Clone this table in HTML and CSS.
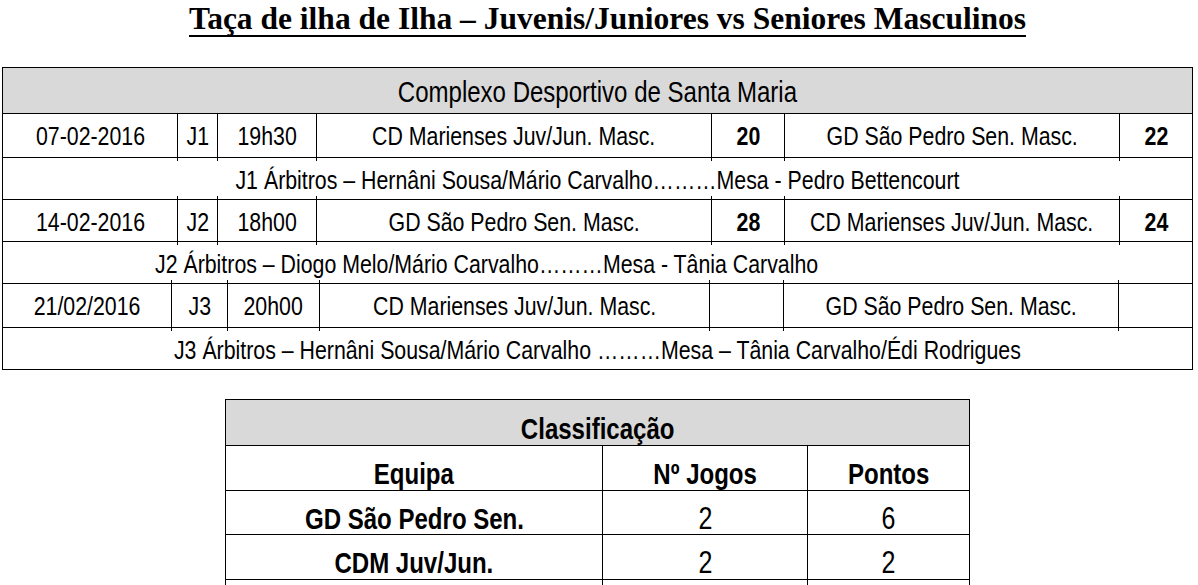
FILE: index.html
```html
<!DOCTYPE html>
<html lang="pt">
<head>
<meta charset="utf-8">
<title>Taça de ilha de Ilha</title>
<link rel="stylesheet" href="styles.css">
</head>
<body>
<h1 class="title"><span class="title-text">Taça de ilha de Ilha – Juvenis/Juniores vs Seniores Masculinos</span></h1>

<div class="schedule">
  <div class="venue"><span class="t">Complexo Desportivo de Santa Maria</span></div>

  <div class="game tall first">
    <div class="cell"><span class="t">07-02-2016</span></div>
    <div class="cell"><span class="t">J1</span></div>
    <div class="cell"><span class="t">19h30</span></div>
    <div class="cell"><span class="t">CD Marienses Juv/Jun. Masc.</span></div>
    <div class="cell score"><span class="t">20</span></div>
    <div class="cell"><span class="t">GD São Pedro Sen. Masc.</span></div>
    <div class="cell score"><span class="t">22</span></div>
  </div>
  <div class="refs"><span class="t">J1 Árbitros – Hernâni Sousa/Mário Carvalho………Mesa - Pedro Bettencourt</span></div>

  <div class="game">
    <div class="cell"><span class="t">14-02-2016</span></div>
    <div class="cell"><span class="t">J2</span></div>
    <div class="cell"><span class="t">18h00</span></div>
    <div class="cell"><span class="t">GD São Pedro Sen. Masc.</span></div>
    <div class="cell score"><span class="t">28</span></div>
    <div class="cell"><span class="t">CD Marienses Juv/Jun. Masc.</span></div>
    <div class="cell score"><span class="t">24</span></div>
  </div>
  <div class="refs left"><span class="t">J2 Árbitros – Diogo Melo/Mário Carvalho………Mesa - Tânia Carvalho</span></div>

  <div class="game tall alt">
    <div class="cell"><span class="t">21/02/2016</span></div>
    <div class="cell"><span class="t">J3</span></div>
    <div class="cell"><span class="t">20h00</span></div>
    <div class="cell"><span class="t">CD Marienses Juv/Jun. Masc.</span></div>
    <div class="cell score"></div>
    <div class="cell"><span class="t">GD São Pedro Sen. Masc.</span></div>
    <div class="cell score"></div>
  </div>
  <div class="refs"><span class="t">J3 Árbitros – Hernâni Sousa/Mário Carvalho ………Mesa – Tânia Carvalho/Édi Rodrigues</span></div>
</div>

<div class="standings">
  <div class="standings-head"><span class="t">Classificação</span></div>
  <div class="standings-row labels">
    <div class="scell"><span class="t">Equipa</span></div>
    <div class="scell"><span class="t">Nº Jogos</span></div>
    <div class="scell"><span class="t">Pontos</span></div>
  </div>
  <div class="standings-row">
    <div class="scell team"><span class="t">GD São Pedro Sen.</span></div>
    <div class="scell num"><span class="t">2</span></div>
    <div class="scell num"><span class="t">6</span></div>
  </div>
  <div class="standings-row tall">
    <div class="scell team"><span class="t">CDM Juv/Jun.</span></div>
    <div class="scell num"><span class="t">2</span></div>
    <div class="scell num"><span class="t">2</span></div>
  </div>
  <div class="standings-row tall">
    <div class="scell team"></div>
    <div class="scell num"></div>
    <div class="scell num"></div>
  </div>
</div>
</body>
</html>
```

FILE: styles.css
```css
* { box-sizing: border-box; }

html, body {
  margin: 0;
  padding: 0;
  background: #fff;
}

body {
  height: 585px;
  overflow: hidden;
  color: #000;
  font-family: "Liberation Sans", Arial, sans-serif;
}

/* Arial Narrow look: Liberation Sans condensed to 82% width */
.t {
  display: inline-block;
  white-space: nowrap;
  transform: scaleX(0.82);
  transform-origin: 50% 50%;
}

/* ---------- title ---------- */
.title {
  margin: 0;
  height: 67px;
  padding-left: 17px;
  text-align: center;
  font-family: "Liberation Serif", "Times New Roman", serif;
  font-weight: bold;
  font-size: 31.5px;
  line-height: 38px;
}

.title-text {
  text-decoration: underline;
  text-decoration-thickness: 2px;
  text-underline-offset: 6px;
}

/* ---------- schedule table ---------- */
.schedule {
  margin-left: 2px;
  width: 1191px;
  border: 1px solid #000;
  border-bottom: none;
}

.venue {
  display: flex;
  justify-content: center;
  align-items: flex-start;
  height: 46px;
  padding-top: 7px;
  background: #d9d9d9;
  border-bottom: 1px solid #000;
  font-size: 29.3px;
  line-height: 34px;
}

.game {
  display: grid;
  grid-template-columns: 175px 40px 99px 395px 73px 335px 72px;
  height: 42px;
  border-bottom: 1px solid #000;
  font-size: 26px;
  line-height: 30px;
}

.game.tall { height: 44px; }

.game.alt {
  grid-template-columns: 169px 56px 92px 390px 74px 335px 73px;
}

.cell {
  position: relative;
  display: flex;
  justify-content: center;
  align-items: flex-start;
  padding-top: 7px;
}

.cell:not(:last-child) { border-right: 1px solid #000; }

/* column rules that run slightly past the row lines, as in the printed sheet */
.cell:not(:last-child)::after {
  content: "";
  position: absolute;
  right: -1px;
  top: -4px;
  bottom: -4px;
  width: 1px;
  background: #000;
}

.game.first .cell:not(:last-child)::after { top: 0; }

.score { font-weight: bold; }

.refs {
  display: flex;
  justify-content: center;
  align-items: flex-start;
  height: 42px;
  padding-top: 7px;
  border-bottom: 1px solid #000;
  font-size: 26px;
  line-height: 30px;
}

.refs.left {
  justify-content: flex-start;
  padding-left: 152px;
}

.refs.left .t { transform-origin: 0 50%; }

/* ---------- standings table ---------- */
.standings {
  margin-top: 29px;
  margin-left: 225px;
  width: 745px;
  border: 1px solid #000;
  border-bottom: none;
  font-size: 29.3px;
  line-height: 34px;
}

.standings-head {
  display: flex;
  justify-content: center;
  align-items: flex-start;
  height: 46px;
  padding-top: 12px;
  background: #d9d9d9;
  border-bottom: 1px solid #000;
  font-weight: bold;
}

.standings-row {
  display: grid;
  grid-template-columns: 377px 205px 161px;
  height: 44px;
  border-bottom: 1px solid #000;
}

.standings-row.labels,
.standings-row.tall { height: 45px; }

.scell {
  display: flex;
  justify-content: center;
  align-items: flex-start;
  padding-top: 11px;
}

.scell:not(:last-child) { border-right: 1px solid #000; }

.labels .scell,
.scell.team { font-weight: bold; }

.scell.num {
  font-size: 30.5px;
  padding-top: 10px;
}
```
